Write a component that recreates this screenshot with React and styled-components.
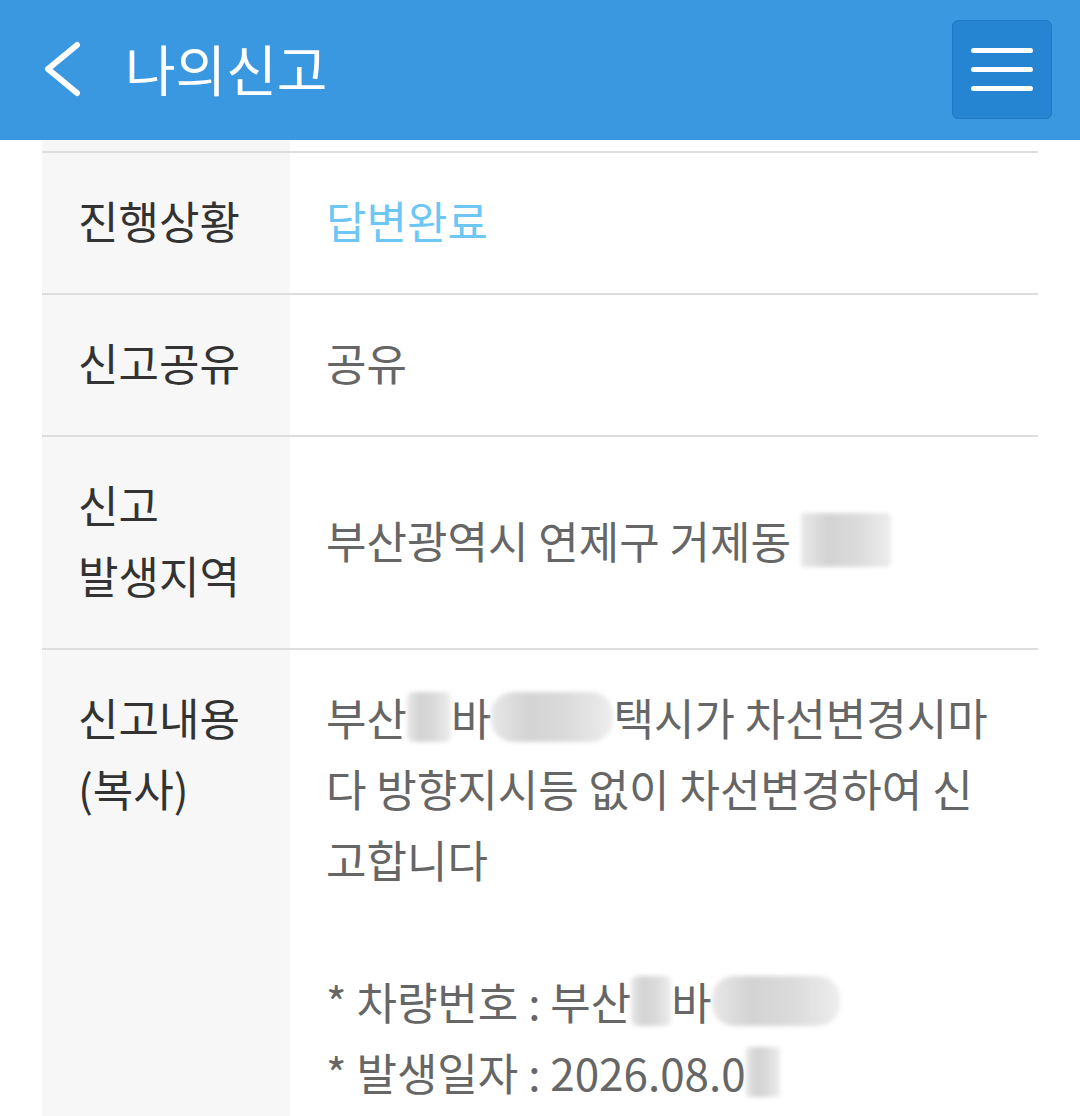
import React from 'react'
import styled, { createGlobalStyle } from 'styled-components'

const GlobalStyle = createGlobalStyle`
    html, body {
        margin: 0;
        padding: 0;
        background: #fff;
        overflow: hidden;
    }
    body {
        font-family: "Noto Sans CJK KR", "Noto Sans", sans-serif;
    }
`

const Page = styled.div`
    width: 1080px;
    height: 1116px;
    overflow: hidden;
    background: #fff;
`

const Header = styled.header`
    height: 140px;
    background: #3a98e0;
    display: flex;
    align-items: center;
    padding: 0 28px 0 40px;
    box-sizing: border-box;
    .back {
        display: flex;
        width: 50px;
        height: 60px;
        margin-right: 35px;
    }
    .title {
        flex: 1;
        margin: 0;
        font-size: 55px;
        font-weight: 400;
        color: #fff;
        line-height: 1;
        padding-bottom: 6px;
    }
`

const MenuButton = styled.button`
    width: 100px;
    height: 99px;
    margin-bottom: 2px;
    border: 1px solid #1f78c4;
    border-radius: 6px;
    background: #2585d2;
    display: flex;
    flex-direction: column;
    justify-content: center;
    align-items: center;
    gap: 14px;
    padding: 0;
    span {
        display: block;
        width: 62px;
        height: 5px;
        border-radius: 3px;
        background: #fff;
    }
`

const Table = styled.div`
    margin: 0 42px;
    display: flex;
    flex-direction: column;
`

const Row = styled.div`
    display: grid;
    grid-template-columns: 248px 1fr;
    border-bottom: 2px solid #dddddd;
    height: ${p => (p.$cut ? `${p.$cut}px` : 'auto')};
`

const Label = styled.div`
    background: #f7f7f7;
    padding: ${p => (p.$empty ? '0' : '32px 10px 37px 36px')};
    font-size: 44px;
    line-height: 71px;
    color: #333;
`

const Value = styled.div`
    padding: 32px 20px 37px 36px;
    font-size: 44px;
    line-height: 71px;
    color: ${p => p.$color || '#666'};
    white-space: nowrap;
    display: ${p => (p.$center ? 'flex' : 'block')};
    align-items: center;
`

const Redact = styled.span`
    display: inline-block;
    width: ${p => p.$w}px;
    height: ${p => p.$h || 50}px;
    vertical-align: ${p => p.$v || -6}px;
    background: linear-gradient(90deg, #e6e6e6 0%, #cfcfcf 30%, #d6d6d6 60%, #ececec 100%);
    border-radius: ${p => p.$r || 6}px;
    filter: blur(2px);
    opacity: 0.9;
`

function BackIcon() {
    return (
        <svg className='back' viewBox='0 0 50 60' fill='none'>
            <path d='M37 5 L8 29 L37 53' stroke='#fff' strokeWidth='6' strokeLinecap='round' strokeLinejoin='round' />
        </svg>
    )
}

function App() {
    return (
        <Page>
            <GlobalStyle />
            <Header>
                <BackIcon />
                <h1 className='title'>나의신고</h1>
                <MenuButton aria-label='메뉴'>
                    <span />
                    <span />
                    <span />
                </MenuButton>
            </Header>
            <Table>
                <Row $cut={11}>
                    <Label $empty />
                    <div />
                </Row>
                <Row>
                    <Label>진행상황</Label>
                    <Value $color='#6ec6f5'>답변완료</Value>
                </Row>
                <Row>
                    <Label>신고공유</Label>
                    <Value>공유</Value>
                </Row>
                <Row>
                    <Label>신고<br />발생지역</Label>
                    <Value $center>
                        <span>부산광역시 연제구 거제동&nbsp;</span>
                        <Redact $w={90} $h={54} $v={0} $r={4} />
                    </Value>
                </Row>
                <Row>
                    <Label>신고내용<br />(복사)</Label>
                    <Value>
                        부산<Redact $w={44} />바<Redact $w={122} $r={22} />택시가 차선변경시마<br />
                        다 방향지시등 없이 차선변경하여 신<br />
                        고합니다<br />
                        <br />
                        * 차량번호 : 부산<Redact $w={40} />바<Redact $w={128} $r={22} /><br />
                        * 발생일자 : 2026.08.0<Redact $w={34} $r={2} />
                    </Value>
                </Row>
            </Table>
        </Page>
    )
}

export default App
